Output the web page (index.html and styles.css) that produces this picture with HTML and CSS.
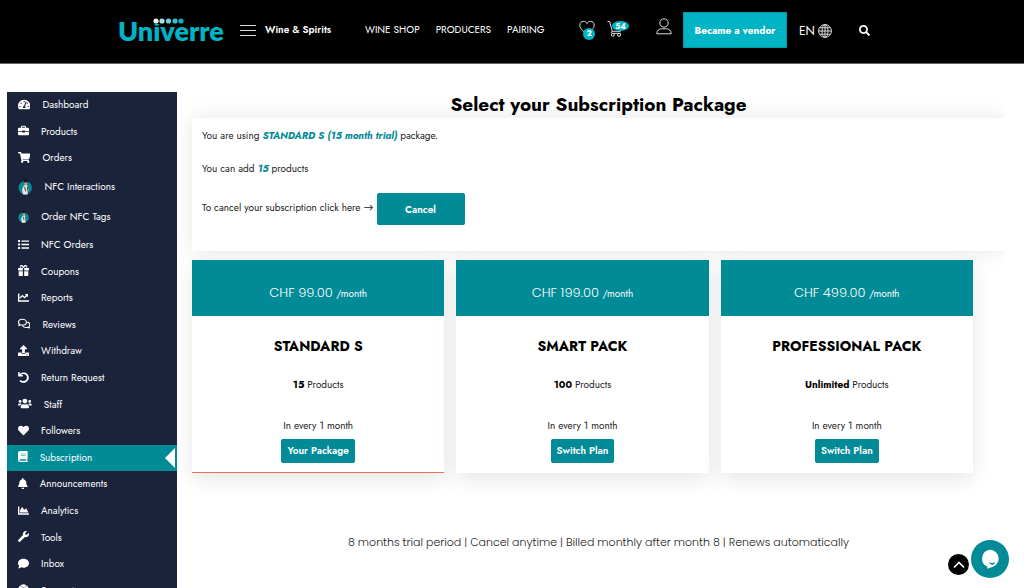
FILE: index.html
```html
<!DOCTYPE html>
<html lang="en">
<head>
  <meta charset="utf-8">
  <title>Univerre - Subscription</title>
  <meta name="viewport" content="width=device-width, initial-scale=1">
  <link rel="stylesheet" href="styles.css">
</head>
<body>

<header class="topbar">
  <a class="logo" href="#">Univerre
    <svg class="logo-dots" viewBox="0 0 32 6" aria-hidden="true">
      <circle cx="3" cy="3" r="2.600" fill="#e3f6f8"/><circle cx="9" cy="3" r="2.600" fill="#a5e3e9"/><circle cx="15.500" cy="3" r="2.600" fill="#6cd2dc"/><circle cx="22" cy="3" r="2.600" fill="#35c2d0"/><circle cx="28" cy="3" r="2.600" fill="#00b4c5"/>
    </svg>
  </a>
  <button class="burger" type="button" aria-label="Menu"><span></span><span></span><span></span></button>
  <a class="spirits" href="#">Wine &amp; Spirits</a>
  <nav class="topnav">
    <a href="#">WINE SHOP</a>
    <a href="#">PRODUCERS</a>
    <a href="#">PAIRING</a>
  </nav>
  <div class="tools">
    <a class="tool" href="#" aria-label="Wishlist">
      <svg width="16" height="16" viewBox="0 0 16 16" class="line"><path d="M8 14.500C4 11 .8 8.500.8 5.200.8 2.900 2.400 1.300 4.500 1.300 6 1.300 7.300 2.100 8 3.500 8.700 2.100 10 1.300 11.500 1.300c2.100 0 3.700 1.600 3.700 3.900 0 3.300-3.200 5.800-7.200 9.300z"/></svg>
      <span class="badge heart-badge">2</span>
    </a>
    <a class="tool" href="#" aria-label="Cart">
      <svg width="16" height="17" viewBox="0 0 16 17" class="line"><path d="M.5 1.500h2.200l2.600 9.800h8.200l2-6.300M5.300 11.300c-1.500.2-1.300 2 0 2h8.500"/><circle cx="5.800" cy="14.900" r="1.500"/><circle cx="12" cy="14.900" r="1.500"/></svg>
      <span class="badge cart-badge">54</span>
    </a>
  </div>
  <a class="user" href="#" aria-label="Account">
    <svg width="16" height="17" viewBox="0 0 16 17" class="line"><circle cx="8" cy="5" r="4.200"/><path d="M.8 15.800c0-3.300 2.200-5 4.700-5h5c2.500 0 4.700 1.700 4.700 5z"/></svg>
  </a>
  <button class="vendor" type="button">Became a vendor</button>
  <a class="lang" href="#">EN
    <svg width="14" height="14" viewBox="0 0 14 14" class="line" aria-hidden="true"><circle cx="7" cy="7" r="6.400"/><ellipse cx="7" cy="7" rx="3" ry="6.400"/><path d="M7 .6v12.800M.6 7h12.800M1.500 3.800h11M1.500 10.200h11"/></svg>
  </a>
  <button class="search" type="button" aria-label="Search">
    <svg width="11" height="11" viewBox="0 0 512 512" fill="#fff"><path d="M505 442.700L405.300 343c-4.500-4.500-10.600-7-17-7H372c27.600-35.300 44-79.700 44-128C416 93.100 322.900 0 208 0S0 93.100 0 208s93.100 208 208 208c48.300 0 92.700-16.400 128-44v16.300c0 6.400 2.500 12.500 7 17l99.700 99.700c9.400 9.400 24.600 9.400 33.900 0l28.300-28.300c9.400-9.400 9.400-24.600.1-34zM208 336c-70.700 0-128-57.200-128-128 0-70.700 57.200-128 128-128 70.700 0 128 57.200 128 128 0 70.700-57.200 128-128 128z"/></svg>
  </button>
</header>

<div class="page">
  <nav class="sidebar">
    <a href="#"><svg viewBox="0 0 576 512"><path d="M288 32C128.940 32 0 160.940 0 320c0 52.800 14.250 102.260 39.060 144.800 5.610 9.620 16.300 15.200 27.440 15.200h443c11.140 0 21.830-5.580 27.440-15.200C561.750 422.260 576 372.800 576 320c0-159.060-128.940-288-288-288zm0 64c14.710 0 26.580 10.130 30.320 23.650-1.110 2.260-2.640 4.230-3.450 6.670l-9.220 27.670c-5.130 3.490-10.970 6.010-17.640 6.010-17.670 0-32-14.330-32-32S270.330 96 288 96zM96 384c-17.670 0-32-14.330-32-32s14.330-32 32-32 32 14.330 32 32-14.330 32-32 32zm48-160c-17.670 0-32-14.330-32-32s14.330-32 32-32 32 14.330 32 32-14.330 32-32 32zm246.770-72.410l-61.330 184C343.130 347.330 352 364.540 352 384c0 11.720-3.380 22.550-8.880 32H232.880c-5.500-9.450-8.880-20.280-8.880-32 0-33.940 26.500-61.430 59.900-63.590l61.340-184.010c4.170-12.560 17.730-19.450 30.360-15.170 12.570 4.190 19.350 17.790 15.170 30.360zM432 224c-17.670 0-32-14.330-32-32s14.330-32 32-32 32 14.330 32 32-14.330 32-32 32zM480 384c-17.670 0-32-14.330-32-32s14.330-32 32-32 32 14.330 32 32-14.330 32-32 32z"/></svg>Dashboard</a>
    <a href="#"><svg viewBox="0 0 512 512"><path fill-rule="evenodd" d="M144 128V80q0-48 48-48h128q48 0 48 48v48h96q48 0 48 48v112H320v-16q0-16-16-16h-96q-16 0-16 16v16H0V176q0-48 48-48zm48 0h128V80H192zM0 320h192v16q0 16 16 16h96q16 0 16-16v-16h192v112q0 48-48 48H48q-48 0-48-48z"/></svg>Products</a>
    <a href="#"><svg viewBox="0 0 576 512"><path d="M528.120 301.319l47.273-208C578.806 78.301 567.391 64 551.990 64H159.208l-9.166-44.810C147.758 8.021 137.930 0 126.529 0H24C10.745 0 0 10.745 0 24v16c0 13.255 10.745 24 24 24h69.883l70.248 343.435C147.325 417.100 136 435.222 136 456c0 30.928 25.072 56 56 56s56-25.072 56-56c0-15.674-6.447-29.835-16.824-40h209.647C430.447 426.165 424 440.326 424 456c0 30.928 25.072 56 56 56s56-25.072 56-56c0-22.172-12.888-41.332-31.579-50.405l5.517-24.276c3.413-15.018-8.002-29.319-23.403-29.319H218.117l-6.545-32h293.145c11.206 0 20.920-7.754 23.403-18.681z"/></svg>Orders</a>
    <a class="nfc" href="#"><svg class="nfc-big" viewBox="0 0 16 20"><circle cx="8" cy="12" r="7.500" fill="#058b98"/><path d="M6.500 2.500h4v4h-4z" fill="#15171f"/><path d="M7 6h3v3H7z" fill="#c9a063"/><path d="M6.500 9.500l3.500-.5 2 6-1.500 4.500H5.500L4.500 14z" fill="#e8e8e4"/><path d="M7.500 11l1 5M10.500 11l1 7" stroke="#222" fill="none"/></svg>NFC Interactions</a>
    <a class="nfc" href="#"><svg class="nfc-small" viewBox="0 0 16 20"><circle cx="8" cy="12" r="7.500" fill="#058b98"/><path d="M6.500 2.500h4v4h-4z" fill="#15171f"/><path d="M7 6h3v3H7z" fill="#c9a063"/><path d="M6.500 9.500l3.500-.5 2 6-1.500 4.500H5.500L4.500 14z" fill="#e8e8e4"/><path d="M7.500 11l1 5M10.500 11l1 7" stroke="#222" fill="none"/></svg>Order NFC Tags</a>
    <a href="#"><svg viewBox="0 0 512 512"><path d="M0 48h96v96H0zM0 208h96v96H0zM0 368h96v96H0zM160 64h352v64H160zM160 224h352v64H160zM160 384h352v64H160z"/></svg>NFC Orders</a>
    <a href="#"><svg viewBox="0 0 512 512"><path d="M32 288v192q0 32 32 32h160V288zM288 512h160q32 0 32-32V288H288z"/><path fill-rule="evenodd" d="M104 144C50 84 96 0 160 0c42 0 67 23 96 64 29-41 54-64 96-64 64 0 110 84 56 144h72q32 0 32 32v80H288V144h-64v112H0v-80q0-32 32-32zm56 0h72c-28-54-47-88-76-88-54 0-54 88 4 88zm192 0c58 0 58-88 4-88-29 0-48 34-76 88z"/></svg>Coupons</a>
    <a href="#"><svg viewBox="0 0 512 512"><path d="M64 64H0v384h512v-64H64zM320 96h144v144l-48-48-112 112-96-96-96 96-40-44 136-136 96 96 64-64z"/></svg>Reports</a>
    <a href="#"><svg viewBox="0 0 576 512"><g fill="none" stroke="#fff" stroke-width="52" stroke-linejoin="round"><path d="M208 56C110 56 24 116 24 196c0 36 18 66 42 90-4 24-18 46-34 62 40 0 72-14 100-30 24 8 50 12 76 12 100 0 184-58 184-134S308 56 208 56z"/><path d="M430 190c70 16 122 60 122 122 0 34-18 66-42 88 4 24 18 46 34 62-40 0-72-14-100-30-24 8-50 12-76 12-60 0-120-24-154-70"/></g></svg>Reviews</a>
    <a href="#"><svg viewBox="0 0 512 512"><path d="M296 384h-80q-24 0-24-24V192h-88q-28-2-12-28L242 8q14-12 28 0l150 156q14 26-12 28h-88v168q0 24-24 24z"/><path fill-rule="evenodd" d="M24 352h136q0 64 56 64h80q56 0 56-64h136q24 0 24 24v112q0 24-24 24H24q-24 0-24-24V376q0-24 24-24zm348 92v36h28v-36zm64 0v36h28v-36z"/></svg>Withdraw</a>
    <a href="#"><svg viewBox="0 0 512 512"><path d="M24 0h40q14 0 14 16v76C220-50 496 20 504 256c4 222-254 326-420 186-12-10-10-22 0-32l28-28c10-8 20-8 30 0 112 88 272 18 274-126 0-146-170-214-286-112h78q16 0 16 16v32q0 16-16 16H24q-16 0-16-16V16Q8 0 24 0z"/></svg>Return Request</a>
    <a href="#"><svg viewBox="0 0 640 512"><circle cx="96" cy="160" r="64"/><circle cx="544" cy="160" r="64"/><circle cx="320" cy="144" r="112"/><path d="M0 320q0-64 64-64h64q28 0 46 20-58 30-74 76H32q-32 0-32-32zM640 320q0-64-64-64h-64q-28 0-46 20 58 30 74 76h68q32 0 32-32zM128 432c0-100 40-144 115-144 52 24 102 24 154 0 75 0 115 44 115 144q0 48-48 48H176q-48 0-48-48z"/></svg>Staff</a>
    <a href="#"><svg viewBox="0 0 512 512"><path d="M462.300 62.600C407.500 15.900 326 24.300 275.700 76.200L256 96.500l-19.700-20.300C186.100 24.300 104.500 15.900 49.700 62.600c-62.800 53.600-66.100 149.800-9.900 207.900l193.500 199.800c12.500 12.900 32.800 12.900 45.300 0l193.500-199.800c56.300-58.100 53-154.300-9.800-207.900z"/></svg>Followers</a>
    <a class="active" href="#"><svg viewBox="0 0 448 512"><path fill-rule="evenodd" d="M96 0h328q24 0 24 24v336q0 16-12 22-10 28 0 62 12 6 12 20v24q0 24-24 24H96q-96-6-96-96V96Q6 0 96 0zm0 384c-44 0-44 64 0 64h286q-6-32 0-64zM128 128v28h224v-28zm0 66v28h224v-28z"/></svg>Subscription</a>
    <a href="#"><svg viewBox="0 0 448 512"><path d="M224 512c35.320 0 63.970-28.650 63.970-64H160.030c0 35.350 28.650 64 63.970 64zm215.390-149.710c-19.320-20.760-55.470-51.990-55.470-154.290 0-77.700-54.480-139.900-127.940-155.160V32c0-17.670-14.320-32-31.980-32s-31.980 14.330-31.980 32v20.840C118.560 68.100 64.080 130.300 64.080 208c0 102.300-36.150 133.530-55.470 154.290-6 6.450-8.660 14.160-8.610 21.710.11 16.400 12.980 32 32.100 32h383.800c19.120 0 32-15.600 32.100-32 .05-7.550-2.610-15.270-8.610-21.710z"/></svg>Announcements</a>
    <a href="#"><svg viewBox="0 0 512 512"><path d="M500 384c6.600 0 12 5.400 12 12v40c0 6.600-5.400 12-12 12H12c-6.600 0-12-5.400-12-12V76c0-6.600 5.400-12 12-12h40c6.600 0 12 5.400 12 12v308h436zM372.700 159.500L288 216l-85.300-113.700c-5.100-6.800-15.500-6.300-19.900 1L96 248v104h384l-89.900-187.800c-3.200-6.500-11.400-8.700-17.400-4.700z"/></svg>Analytics</a>
    <a href="#"><svg viewBox="0 0 512 512"><path d="M507.730 109.100c-2.240-9.030-13.540-12.090-20.120-5.510l-74.360 74.360-67.880-11.310-11.310-67.880 74.360-74.360c6.620-6.620 3.430-17.900-5.660-20.160-47.380-11.740-99.550.91-136.580 37.930-39.640 39.640-50.550 97.100-34.050 147.200L18.740 402.760c-24.990 24.990-24.990 65.510 0 90.500 24.990 24.990 65.510 24.990 90.500 0l213.210-213.210c50.120 16.710 107.470 5.680 147.370-34.220 37.070-37.070 49.700-89.320 37.910-136.730z"/></svg>Tools</a>
    <a href="#"><svg viewBox="0 0 512 512"><path d="M256 32C114.600 32 0 125.100 0 240c0 49.600 21.400 95 57 130.700C44.500 421.100 2.700 466 2.200 466.500c-2.200 2.300-2.800 5.700-1.500 8.700S4.800 480 8 480c66.300 0 116-31.800 140.600-51.400 32.700 12.300 69 19.400 107.400 19.400 141.400 0 256-93.100 256-208S397.400 32 256 32z"/></svg>Inbox</a>
    <a href="#"><svg viewBox="0 0 512 512"><circle cx="256" cy="256" r="165" fill="none" stroke="#fff" stroke-width="150"/><path d="M110 60l60 90M402 60l-60 90M110 452l60-90M402 452l-60-90" stroke="#1b233b" stroke-width="30"/></svg>Support</a>
  </nav>

  <main class="content">
    <h1>Select your Subscription Package</h1>

    <section class="current">
      <p>You are using <em>STANDARD S (15 month trial)</em> package.</p>
      <p>You can add <em>15</em> products</p>
      <div class="cancel-row">To cancel your subscription click here → <button class="cancel" type="button">Cancel</button></div>
    </section>

    <section class="packs">
      <article class="pack mine">
        <div class="price">CHF 99.00 <small>/month</small></div>
        <h2>STANDARD S</h2>
        <p class="amount"><b>15</b> Products</p>
        <p class="every">In every 1 month</p>
        <button type="button">Your Package</button>
      </article>
      <article class="pack">
        <div class="price">CHF 199.00 <small>/month</small></div>
        <h2>SMART PACK</h2>
        <p class="amount"><b>100</b> Products</p>
        <p class="every">In every 1 month</p>
        <button type="button">Switch Plan</button>
      </article>
      <article class="pack">
        <div class="price">CHF 499.00 <small>/month</small></div>
        <h2>PROFESSIONAL PACK</h2>
        <p class="amount"><b>Unlimited</b> Products</p>
        <p class="every">In every 1 month</p>
        <button type="button">Switch Plan</button>
      </article>
    </section>

    <p class="terms">8 months trial period | Cancel anytime | Billed monthly after month 8 | Renews automatically</p>
  </main>
</div>

<!-- floating buttons -->
<div class="floating">
  <button class="to-top" type="button" aria-label="Back to top">
    <svg width="12" height="8" viewBox="0 0 12 8"><path d="M1 6.500l5-5 5 5" fill="none" stroke="#fff" stroke-width="1.600"/></svg>
  </button>
  <button class="chat" type="button" aria-label="Chat">
    <svg width="20" height="20" viewBox="0 0 20 20"><path d="M10 .8a8.800 8.800 0 0 1 3.500 16.800L7.300 19.800V17.600A8.800 8.800 0 0 1 10 .8z" fill="#fff"/><path d="M9 13.200q3.200 1.600 6.200 0-.8 2.500-3 2.500T9 13.200z" fill="#018b97"/></svg>
  </button>
</div>

</body>
</html>
```
FILE: styles.css
```css
* {
  box-sizing: border-box;
}

body {
  margin: 0;
  height: 100vh;
  overflow: hidden;
  background: #fff;
  color: #222;
  font-family: Jost, Lato, sans-serif;
  font-size: 10px;
  line-height: 14px;
}

a {
  color: inherit;
  text-decoration: none;
}

button {
  font-family: inherit;
  font-weight: 600;
  color: #fff;
  border: none;
  padding: 0;
  cursor: pointer;
}

h1, h2, p {
  margin: 0;
}

.line {
  fill: none;
  stroke: #ddd;
  stroke-width: 1;
}

/* top bar */
.topbar {
  display: flex;
  align-items: center;
  height: 64px;
  padding: 0 16px 3px 118px;
  background: #000;
  border-bottom: 1px solid #666;
  color: #fff;
  font-size: 10px;
  white-space: nowrap;
}

.logo {
  position: relative;
  width: 106px;
  padding-top: 2px;
  color: #00b4c5;
  font-family: Lato, sans-serif;
  font-size: 27px;
  font-weight: 800;
  line-height: 32px;
}

.logo-dots {
  position: absolute;
  left: 35px;
  top: 5px;
  width: 32px;
  height: 6px;
  background: #000;
}

.burger {
  display: grid;
  gap: 4px;
  width: 16px;
  margin: 0 9px 0 16px;
  background: none;
}

.burger span {
  height: 1px;
  background: #ddd;
}

.spirits {
  width: 100px;
  font-weight: 600;
}

.topnav {
  display: flex;
  gap: 16px;
  width: 214px;
}

.tools {
  display: flex;
  gap: 12px;
  width: 77px;
}

.tool {
  position: relative;
  height: 20px;
}

.badge {
  position: absolute;
  background: #00b4c5;
  border-radius: 50%;
  font-size: 8px;
  font-weight: bold;
  line-height: 11px;
  text-align: center;
}

.heart-badge {
  left: 4px;
  top: 8px;
  width: 12px;
  height: 12px;
}

.cart-badge {
  left: 5px;
  top: 1px;
  width: 17px;
  height: 10px;
  line-height: 10px;
}

.user {
  width: 27px;
  height: 24px;
}

.vendor {
  width: 104px;
  height: 36px;
  margin-right: 12px;
  background: #00b4c5;
  border: 1px solid #0297a5;
  font-size: 10px;
  font-weight: bold;
}

.lang {
  display: flex;
  align-items: center;
  gap: 3px;
  width: 60px;
  padding-top: 2px;
  font-size: 12px;
}

.search {
  display: flex;
  background: none;
}

/* page */
.page {
  display: flex;
  align-items: flex-start;
  gap: 15px;
  padding: 28px 19px 0 7px;
}

.sidebar {
  display: flex;
  flex-direction: column;
  flex: none;
  width: 170px;
  height: 512px;
  background: #1b233b;
  color: #fff;
}

.sidebar a {
  position: relative;
  display: flex;
  align-items: center;
  flex: 1;
  gap: 12px;
  padding-left: 11px;
}

.sidebar .nfc {
  flex: none;
  height: 30px;
}

.sidebar svg {
  height: 11px;
  margin-bottom: 2px;
  fill: #fff;
}

.sidebar .nfc-big {
  height: 18px;
}

.sidebar .nfc-small {
  height: 14px;
}

.sidebar .active {
  background: #018b97;
}

.active::after {
  content: "";
  position: absolute;
  right: 2px;
  border: 10px solid transparent;
  border-right-color: #fff;
  border-left: 0;
}

.content {
  flex: 1;
  min-width: 0;
  margin-left: -15px;
  padding-left: 15px;
  overflow: hidden;
}

h1 {
  color: #000;
  font-size: 19px;
  font-weight: bold;
  line-height: 26px;
  text-align: center;
}

.current {
  padding: 11px 10px;
  height: 133px;
  background: #fff;
  box-shadow: 0 0 20px rgba(0, 0, 0, 0.1);
}

.current p {
  margin-bottom: 19px;
}

.current em {
  color: #018b97;
  font-weight: bold;
}

.cancel-row {
  margin-top: -2px;
}

.cancel {
  width: 88px;
  height: 32px;
  background: #018b97;
  border-radius: 2px;
  font-size: 10px;
  vertical-align: middle;
}

.packs {
  display: grid;
  grid-template-columns: repeat(3, 1fr);
  gap: 12px;
  margin: 9px 32px 0 0;
}

.pack {
  height: 213px;
  background: #fff;
  border-bottom: 1px solid #fff;
  box-shadow: 0 6px 20px rgba(0, 0, 0, 0.1);
  text-align: center;
}

.mine {
  border-bottom-color: #f0704f;
}

.price {
  height: 56px;
  padding-top: 23px;
  background: #018b97;
  color: #fff;
  font-family: Poppins, Inter, sans-serif;
  font-size: 13px;
  font-weight: 300;
  line-height: 20px;
}

.price small {
  font-family: Jost, Lato, sans-serif;
  font-size: 10px;
  font-weight: normal;
}

.pack h2 {
  margin: 20px 0 22px;
  color: #000;
  font-size: 14px;
  font-weight: bold;
  line-height: 20px;
}

.amount {
  margin-bottom: 27px;
}

.amount b {
  color: #000;
}

.every {
  margin-bottom: 6px;
}

.pack button {
  height: 24px;
  padding: 0 6px 1px;
  background: #018b97;
  border-radius: 2px;
  font-size: 10px;
}

.terms {
  margin: 59px 0 40px;
  font-family: Poppins, Inter, sans-serif;
  font-size: 11px;
  font-weight: 300;
  line-height: 20px;
  text-align: center;
}

/* buttons over the page, bottom right */
.floating {
  position: fixed;
  right: 15px;
  bottom: 10px;
  display: flex;
  align-items: flex-end;
  gap: 2px;
}

.floating button {
  display: flex;
  align-items: center;
  justify-content: center;
  border-radius: 50%;
}

.to-top {
  width: 21px;
  height: 21px;
  margin-bottom: 3px;
  background: #000;
}

.chat {
  width: 38px;
  height: 38px;
  background: #018b97;
}
```
